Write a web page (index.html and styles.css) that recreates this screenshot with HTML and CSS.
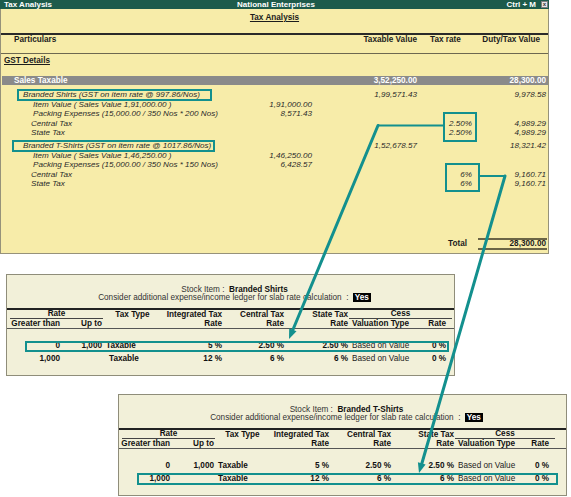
FILE: index.html
```html
<!DOCTYPE html>
<html>
<head>
<meta charset="utf-8">
<title>Tax Analysis</title>
<link rel="stylesheet" href="styles.css">
</head>
<body>
<section class="ta">
  <header class="tbar">
    <span class="tb-l">Tax Analysis</span>
    <span class="tb-c">National Enterprises</span>
    <span class="tb-r">Ctrl + M <span class="xbtn">x</span></span>
  </header>
  <div class="ta-body">
    <div class="ta-title"><span class="ul">Tax Analysis</span></div>
    <div class="grid hdr">
      <div class="c-part">Particulars</div>
      <div></div>
      <div class="num">Taxable Value</div>
      <div class="ctr">Tax rate</div>
      <div class="num pr7">Duty/Tax Value</div>
    </div>
    <div class="gst"><span class="ul">GST Details</span></div>
    <div class="grid bar">
      <div class="c-bar">Sales Taxable</div>
      <div></div>
      <div class="num">3,52,250.00</div>
      <div></div>
      <div class="num">28,300.00</div>
    </div>

    <div class="grid row item first">
      <div class="c-item">Branded Shirts (GST on item rate @ 997.86/Nos)</div>
      <div></div>
      <div class="num">1,99,571.43</div>
      <div></div>
      <div class="num">9,978.58</div>
    </div>
    <div class="grid row">
      <div class="c-sub">Item Value ( Sales Value 1,91,000.00 )</div>
      <div class="num">1,91,000.00</div>
      <div></div><div></div><div></div>
    </div>
    <div class="grid row">
      <div class="c-sub">Packing Expenses (15,000.00 / 350 Nos * 200 Nos)</div>
      <div class="num">8,571.43</div>
      <div></div><div></div><div></div>
    </div>
    <div class="grid row">
      <div class="c-tax">Central Tax</div>
      <div></div><div></div>
      <div class="num">2.50%</div>
      <div class="num">4,989.29</div>
    </div>
    <div class="grid row">
      <div class="c-tax">State Tax</div>
      <div></div><div></div>
      <div class="num">2.50%</div>
      <div class="num">4,989.29</div>
    </div>

    <div class="grid row item second">
      <div class="c-item">Branded T-Shirts (GST on item rate @ 1017.86/Nos)</div>
      <div></div>
      <div class="num">1,52,678.57</div>
      <div></div>
      <div class="num">18,321.42</div>
    </div>
    <div class="grid row">
      <div class="c-sub">Item Value ( Sales Value 1,46,250.00 )</div>
      <div class="num">1,46,250.00</div>
      <div></div><div></div><div></div>
    </div>
    <div class="grid row">
      <div class="c-sub">Packing Expenses (15,000.00 / 350 Nos * 150 Nos)</div>
      <div class="num">6,428.57</div>
      <div></div><div></div><div></div>
    </div>
    <div class="grid row">
      <div class="c-tax">Central Tax</div>
      <div></div><div></div>
      <div class="num">6%</div>
      <div class="num">9,160.71</div>
    </div>
    <div class="grid row">
      <div class="c-tax">State Tax</div>
      <div></div><div></div>
      <div class="num">6%</div>
      <div class="num">9,160.71</div>
    </div>

    <div class="grid total">
      <div></div><div></div><div></div>
      <div class="num tot-l">Total</div>
      <div class="num tot-v">28,300.00</div>
    </div>
  </div>
</section>

<section class="slab slab-a">
  <div class="si">Stock Item :&nbsp; <b>Branded Shirts</b></div>
  <div class="consider">Consider additional expense/income ledger for slab rate calculation&nbsp; : <span class="yes">Yes</span></div>
  <div class="shead">
    <div class="sg">
      <div class="h-rate">Rate</div>
      <div class="ctr">Tax Type</div>
      <div class="num">Integrated Tax</div>
      <div class="num">Central Tax</div>
      <div class="num">State Tax</div>
      <div class="h-cess">Cess</div>
    </div>
    <div class="sg">
      <div class="num">Greater than</div>
      <div class="num">Up to</div>
      <div></div>
      <div class="num">Rate</div>
      <div class="num">Rate</div>
      <div class="num">Rate</div>
      <div class="lft">Valuation Type</div>
      <div class="num">Rate</div>
    </div>
  </div>
  <div class="sbody">
    <div class="sg srow">
      <div class="num b">0</div>
      <div class="num b">1,000</div>
      <div class="lft b">Taxable</div>
      <div class="num b">5 %</div>
      <div class="num b">2.50 %</div>
      <div class="num b">2.50 %</div>
      <div class="lft">Based on Value</div>
      <div class="num b">0 %</div>
    </div>
    <div class="sg srow">
      <div class="num b">1,000</div>
      <div></div>
      <div class="lft b ind">Taxable</div>
      <div class="num b">12 %</div>
      <div class="num b">6 %</div>
      <div class="num b">6 %</div>
      <div class="lft">Based on Value</div>
      <div class="num b">0 %</div>
    </div>
  </div>
</section>

<section class="slab slab-b">
  <div class="si">Stock Item :&nbsp; <b>Branded T-Shirts</b></div>
  <div class="consider">Consider additional expense/income ledger for slab rate calculation&nbsp; : <span class="yes">Yes</span></div>
  <div class="shead">
    <div class="sg">
      <div class="h-rate">Rate</div>
      <div class="ctr">Tax Type</div>
      <div class="num">Integrated Tax</div>
      <div class="num">Central Tax</div>
      <div class="num">State Tax</div>
      <div class="h-cess">Cess</div>
    </div>
    <div class="sg">
      <div class="num">Greater than</div>
      <div class="num">Up to</div>
      <div></div>
      <div class="num">Rate</div>
      <div class="num">Rate</div>
      <div class="num">Rate</div>
      <div class="lft">Valuation Type</div>
      <div class="num">Rate</div>
    </div>
  </div>
  <div class="sbody">
    <div class="sg srow">
      <div class="num b">0</div>
      <div class="num b">1,000</div>
      <div class="lft b">Taxable</div>
      <div class="num b">5 %</div>
      <div class="num b">2.50 %</div>
      <div class="num b">2.50 %</div>
      <div class="lft">Based on Value</div>
      <div class="num b">0 %</div>
    </div>
    <div class="sg srow">
      <div class="num b">1,000</div>
      <div></div>
      <div class="lft b">Taxable</div>
      <div class="num b">12 %</div>
      <div class="num b">6 %</div>
      <div class="num b">6 %</div>
      <div class="lft">Based on Value</div>
      <div class="num b">0 %</div>
    </div>
  </div>
</section>

<svg class="annot" width="571" height="497" viewBox="0 0 571 497" aria-hidden="true">
  <g fill="none" stroke="#13908e" stroke-width="2">
    <rect x="18" y="90" width="193" height="10"/>
    <rect x="13" y="141" width="201" height="10"/>
    <rect x="444" y="113" width="32" height="28"/>
    <rect x="446" y="164" width="33" height="27"/>
    <rect x="26" y="342" width="422" height="9"/>
    <rect x="138" y="474" width="419" height="10"/>
    <path d="M443 125.5H378"/>
    <path d="M480 176H505"/>
  </g>
  <g fill="none" stroke="#13908e" stroke-width="3" stroke-linecap="round">
    <path d="M378 125.5L292.4 331"/>
    <path d="M505 176L421.4 465"/>
  </g>
  <g fill="#13908e">
    <polygon points="289,339 296.5,331.3 289.2,328.2"/>
    <polygon points="419,473 425.6,464.5 417.9,462.3"/>
  </g>
</svg>
</body>
</html>
```

FILE: styles.css
```css
* { box-sizing: border-box; }
html, body { margin: 0; padding: 0; }
body {
  width: 571px;
  height: 497px;
  position: relative;
  overflow: hidden;
  background: #ffffff;
  color: #1c1c1c;
  font-family: "Liberation Sans", Arial, sans-serif;
}

/* ---------- Tax Analysis window ---------- */
.ta {
  width: 549px;
  height: 254px;
  display: flex;
  flex-direction: column;
}
.tbar {
  height: 9px;
  background: #1d5b4b;
  color: #ffffff;
  font-weight: bold;
  font-size: 8px;
  line-height: 9px;
  display: grid;
  grid-template-columns: 1fr auto 1fr;
  padding: 0 1px 0 4px;
}
.tb-r {
  justify-self: end;
  display: flex;
  align-items: center;
  gap: 5px;
}
.xbtn {
  width: 7px;
  height: 7px;
  background: #e6e6e6;
  border: 1px solid #7d7d7d;
  color: #333333;
  font-size: 6px;
  line-height: 5px;
  text-align: center;
  font-weight: bold;
}
.ta-body {
  flex: 1;
  display: flex;
  flex-direction: column;
  background: #f7eca9;
  border: 1px solid #96927a;
  border-top: 0;
}
.ul { text-decoration: underline; }
.ta-title {
  height: 24px;
  padding-top: 3px;
  line-height: 12px;
  text-align: center;
  font-weight: bold;
  font-size: 8.2px;
}
.grid {
  display: grid;
  grid-template-columns: 250px 62px 105px 55px 74px;
}
.num { text-align: right; padding-right: 1px; white-space: nowrap; }
.ctr { text-align: center; white-space: nowrap; }
.lft { text-align: left; white-space: nowrap; padding-left: 3px; }
.pr7 { padding-right: 7px; }
.hdr {
  height: 21px;
  border-top: 2px solid #2a2a2a;
  border-bottom: 1px solid #6d6850;
  font-weight: bold;
  font-size: 8.2px;
  line-height: 9px;
}
.c-part { padding-left: 13px; }
.gst {
  height: 22px;
  padding: 2px 0 0 3px;
  line-height: 10px;
  font-weight: bold;
  font-size: 8.2px;
}
.bar {
  grid-template-columns: 249px 62px 105px 55px 74px;
  margin-left: 1px;
  height: 9px;
  line-height: 9px;
  background: #8a8a8a;
  color: #ffffff;
  font-weight: bold;
  font-size: 8.2px;
}
.c-bar { padding-left: 12px; }
.row {
  height: 9.3px;
  line-height: 9.3px;
  font-style: italic;
  font-size: 8.1px;
  color: #2a2a2a;
  white-space: nowrap;
}
.row.item { height: 10px; line-height: 10px; }
.row.first { margin-top: 5px; }
.row.second { margin-top: 3.8px; }
.c-item { padding-left: 22px; }
.c-sub { padding-left: 32px; }
.c-tax { padding-left: 30px; }
.total {
  margin-top: auto;
  margin-bottom: 3px;
  height: 12px;
  font-weight: bold;
  font-size: 8.2px;
  line-height: 8px;
}
.tot-l { padding-right: 6px; padding-top: 2px; }
.tot-v {
  margin-left: 5px;
  border-top: 2px solid #6b6546;
  border-bottom: 2px solid #6b6546;
}

/* ---------- Slab rate panels ---------- */
.slab {
  width: 449px;
  height: 102px;
  border: 1px solid #8f8d7a;
  background: #f2f0d9;
  font-size: 8.2px;
  color: #222222;
}
.slab-a { margin: 20px 0 0 6px; --cols: 54px 42px 59px 61px 62px 64px 66px 32px; }
.slab-b { margin: 18px 0 0 118px; --cols: 52px 44px 55px 60px 62px 63px 65px 30px; }
.si {
  padding: 10px 0 0 8px;
  line-height: 9px;
  text-align: center;
  color: #333333;
}
.si b { color: #111111; }
.consider {
  margin-top: -1px;
  padding-left: 8px;
  line-height: 9px;
  text-align: center;
  color: #333333;
}
.yes {
  background: #000000;
  color: #ffffff;
  font-weight: bold;
  padding: 0 2px;
  margin-left: 2px;
}
.shead {
  margin-top: 6px;
  border-top: 2px solid #222222;
  border-bottom: 1px solid #555555;
  font-weight: bold;
  color: #111111;
}
.sg {
  display: grid;
  grid-template-columns: var(--cols);
  height: 9px;
  line-height: 9px;
}
.h-rate {
  grid-column: 1 / 3;
  text-align: center;
  margin-left: 3px;
  border-bottom: 1px solid #444444;
  line-height: 8px;
}
.h-cess {
  grid-column: 7 / 9;
  text-align: center;
  margin-right: -5px;
  border-bottom: 1px solid #444444;
  line-height: 8px;
}
.sbody { padding-top: 11px; }
.srow { height: 12px; line-height: 12px; }
.srow + .srow { margin-top: 1px; }
.b { font-weight: bold; color: #111111; }
.ind { padding-left: 6px; }

/* ---------- Annotation overlay ---------- */
.annot {
  position: absolute;
  left: 0;
  top: 0;
  pointer-events: none;
}
```
